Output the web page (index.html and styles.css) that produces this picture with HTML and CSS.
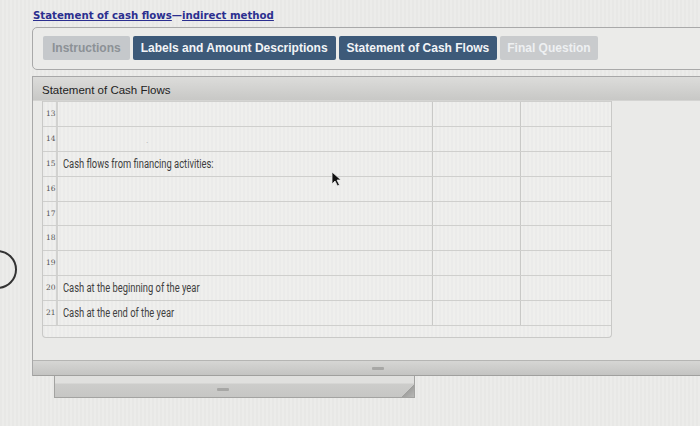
FILE: index.html
```html
<!DOCTYPE html>
<html>
<head>
<meta charset="utf-8">
<link rel="stylesheet" href="styles.css">
</head>
<body>
<div class="page">
  <h1 class="title"><a>Statement of cash flows</a>—<a>indirect method</a></h1>
  <div class="tabs-box">
    <div class="tab tab-grey">Instructions</div>
    <div class="tab tab-blue">Labels and Amount Descriptions</div>
    <div class="tab tab-blue">Statement of Cash Flows</div>
    <div class="tab tab-light">Final Question</div>
  </div>
  <div class="panel">
    <div class="panel-head">Statement of Cash Flows</div>
    <div class="panel-body">
      <div class="sheet">
        <div class="row"><div class="num">13</div><div class="lbl"></div><div class="amt"></div><div class="amt"></div></div>
        <div class="row"><div class="num">14</div><div class="lbl"><span class="dot">.</span></div><div class="amt"></div><div class="amt"></div></div>
        <div class="row"><div class="num">15</div><div class="lbl"><span class="txt">Cash flows from financing activities:</span></div><div class="amt"></div><div class="amt"></div></div>
        <div class="row"><div class="num">16</div><div class="lbl"></div><div class="amt"></div><div class="amt"></div></div>
        <div class="row"><div class="num">17</div><div class="lbl"></div><div class="amt"></div><div class="amt"></div></div>
        <div class="row"><div class="num">18</div><div class="lbl"></div><div class="amt"></div><div class="amt"></div></div>
        <div class="row"><div class="num">19</div><div class="lbl"></div><div class="amt"></div><div class="amt"></div></div>
        <div class="row"><div class="num">20</div><div class="lbl"><span class="txt">Cash at the beginning of the year</span></div><div class="amt"></div><div class="amt"></div></div>
        <div class="row"><div class="num">21</div><div class="lbl"><span class="txt">Cash at the end of the year</span></div><div class="amt"></div><div class="amt"></div></div>
        <div class="sheet-foot"></div>
      </div>
    </div>
    <div class="panel-bar"><span class="grip"></span></div>
  </div>
  <div class="sub-bar"><span class="grip"></span><span class="corner"></span></div>
</div>
<div class="circle"></div>
<svg class="cursor" width="12" height="16" viewBox="0 0 12 16"><path d="M1 1 L1 13 L4 10 L6.5 15 L8.5 14 L6 9 L10 9 Z" fill="#111" stroke="#eee" stroke-width="0.8"/></svg>
</body>
</html>
```
FILE: styles.css
```css
html, body { margin: 0; padding: 0; }
body {
  width: 700px; height: 426px; overflow: hidden; position: relative;
  background: repeating-linear-gradient(90deg, #e8e8e6 0px, #e8e8e6 2px, #ececea 2px, #ececea 4px);
  font-family: "Liberation Sans", Arial, sans-serif;
}
.page { padding: 9px 0 0 32px; }
.title {
  margin: 0 0 0 1px; font-size: 10.2px; font-weight: bold; color: #2b2f8f; line-height: 14px;
  font-family: "DejaVu Sans", Verdana, sans-serif;
}
.title a { text-decoration: underline; }
.tabs-box {
  margin-top: 4px; margin-right: -20px;
  border: 1px solid #a9a9a9; border-radius: 5px;
  height: 43px; box-sizing: border-box; padding: 8px 0 0 10px;
  display: flex; gap: 3px; align-items: flex-start;
  background: #ebebe9;
}
.tab {
  height: 24px; line-height: 24px; font-size: 12px; font-weight: bold;
  border-radius: 2px; padding: 0 8px; white-space: nowrap;
}
.tab-grey { background: #c5c8cb; color: #8c9196; padding: 0 9px; }
.tab-blue { background: #3d5a79; color: #f2f4f7; }
.tab-light { background: #c9cbcd; color: #eef0f2; padding: 0 7px; }
.panel {
  margin-top: 6px; margin-right: -20px;
  border: 1px solid #a8a8a8; border-bottom: none;
  background: #eaeae8;
}
.panel-head {
  height: 23px; line-height: 26px; padding-left: 9px;
  font-size: 11.5px; color: #222;
  background: linear-gradient(#dcdcda, #c8c8c6);
  border-bottom: 1px solid #d4d4d2;
}
.panel-body { padding: 0 0 22px 9px; }
.sheet {
  width: 568px; border: 1px solid #c9c9c7; border-top: none; border-radius: 0 0 4px 4px;
  background: repeating-linear-gradient(90deg, #ebebea 0px, #ebebea 2px, #efefed 2px, #efefed 4px);
}
.row { display: flex; height: 24.9px; border-top: 1px solid #cfcfcd; box-sizing: border-box; }
.num {
  width: 15px; border-right: 2px solid #d2d2d0; font-family: "DejaVu Serif", serif;
  font-size: 7.5px; color: #555; padding-left: 3px; box-sizing: border-box; line-height: 24px;
}
.lbl {
  width: 375px; border-right: 1px solid #c9c9c7; padding-left: 5px; box-sizing: border-box;
  font-family: Roboto, "Liberation Sans", sans-serif; font-size: 12px; color: #404040;
  line-height: 25px; white-space: nowrap;
}
.txt { display: inline-block; transform: scaleX(0.78); transform-origin: left center; }
.dot { padding-left: 83px; color: #aaa; font-size: 9px; }
.amt { width: 88px; border-right: 1px solid #c9c9c7; box-sizing: border-box; }
.amt:last-child { border-right: none; flex: 1; }
.sheet-foot { height: 11px; border-top: 1px solid #cfcfcd; }
.panel-bar {
  height: 14px; background: linear-gradient(#d6d6d4, #c4c4c2);
  border-top: 1px solid #b5b5b3; border-bottom: 1px solid #a0a09e;
  display: flex; justify-content: flex-start; padding-left: 339px; align-items: center;
}
.grip { display: block; width: 12px; height: 3px; background: #a7a7a5; border-radius: 1px; }
.sub-bar {
  margin-left: 22px; width: 361px; height: 22px; box-sizing: border-box;
  border: 1px solid #a3a3a1; border-top: none;
  background: linear-gradient(#e0e0de 0px, #e0e0de 7px, #cdcdcb 8px, #c6c6c4);
  position: relative; display: flex; align-items: center; padding-left: 162px; padding-top: 6px;
}
.corner {
  position: absolute; right: 0; bottom: 0; width: 12px; height: 12px;
  background: linear-gradient(135deg, transparent 50%, #a0a09e 50%, #b8b8b6);
}
.circle {
  position: absolute; left: -22px; top: 250px; width: 35px; height: 35px;
  border: 2px solid #333; border-radius: 50%;
}
.cursor { position: absolute; left: 331px; top: 171px; }
```
